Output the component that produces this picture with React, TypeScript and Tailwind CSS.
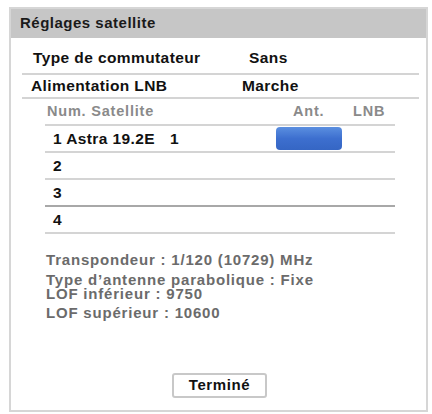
export default function App() {
  const sats = [
    { n: "1 Astra 19.2E", a: "1", on: true },
    { n: "2" },
    { n: "3" },
    { n: "4" },
  ];
  return (
    <div className="w-[432px] h-[414px] bg-white pt-[7px] pl-[9px] pr-[4px] pb-[2px] font-['Liberation_Sans',Arial,sans-serif]">
      <div className="h-full flex flex-col border-2 border-[#d6d6d6]">
        <div className="h-[29px] bg-[#c6c6c6] flex items-center pl-[9px] text-[15px] tracking-[0.5px] font-bold text-[#1a1a1a]">
          Réglages satellite
        </div>
        <div className="pl-[11px] pr-[7px] pt-[4px] text-[15.5px] tracking-[0.4px] font-bold text-[#111]">
          <div className="h-[33px] flex items-center border-b-2 border-[#d4d4d4]">
            <span className="pl-[11px] w-[227px]">Type de commutateur</span>
            <span>Sans</span>
          </div>
          <div className="h-[24px] flex items-center border-b-2 border-[#d4d4d4]">
            <span className="pl-[9px] w-[220px]">Alimentation LNB</span>
            <span>Marche</span>
          </div>
        </div>
        <div className="ml-[34px] mr-[31px]">
          <div className="h-[27px] flex items-center border-b-2 border-[#d4d4d4] text-[14.5px] tracking-[0.8px] font-bold text-[#8a8a8a]">
            <span className="pl-[2px] flex-1">Num. Satellite</span>
            <span className="w-[60px]">Ant.</span>
            <span className="w-[42px]">LNB</span>
          </div>
          {sats.map((s, i) => (
            <div
              key={s.n}
              className={`h-[27px] flex items-center border-b-2 ${
                i === 2 ? "border-[#a8a8a8]" : "border-[#d4d4d4]"
              } text-[15.5px] tracking-[0.4px] font-bold text-[#111]`}
            >
              <span className="pl-[8px] w-[125px]">{s.n}</span>
              <span className="flex-1">{s.a}</span>
              {s.on && (
                <span className="mr-[53px] w-[66px] h-[23px] rounded-[4px] bg-gradient-to-b from-[#5b8fe0] via-[#3d6fcf] to-[#3566c4]" />
              )}
            </div>
          ))}
        </div>
        <div className="ml-[35px] mt-[16px] text-[15px] tracking-[0.8px] font-bold text-[#6b6b6b]">
          <div className="leading-[19px]">Transpondeur : 1/120 (10729) MHz</div>
          <div className="leading-[14px] mt-[4px]">Type d’antenne parabolique : Fixe</div>
          <div className="leading-[14px]">LOF inférieur : 9750</div>
          <div className="leading-[19px] mt-[2px]">LOF supérieur : 10600</div>
        </div>
        <div className="flex-1" />
        <div className="flex justify-center pb-[12px] pl-[2px]">
          <div className="w-[95px] h-[25px] flex items-center justify-center rounded-[3px] border-2 border-[#c8c8c8] text-[15px] tracking-[0.6px] font-bold text-[#111]">
            Terminé
          </div>
        </div>
      </div>
    </div>
  );
}
